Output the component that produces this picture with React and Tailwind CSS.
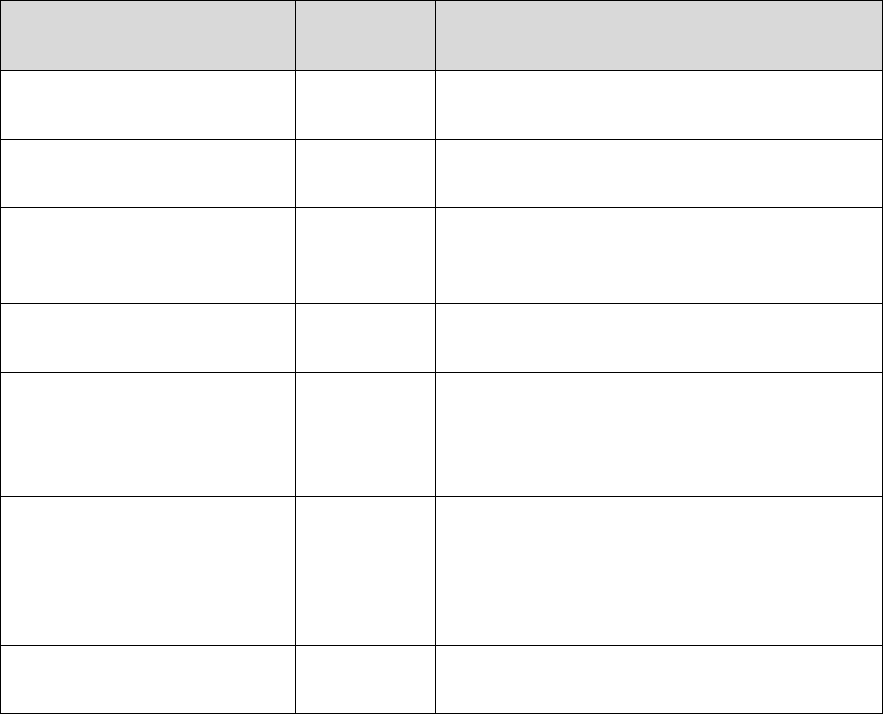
const ROWS = [
  { h: "h-[70px]", head: true },
  { h: "h-[69px]" },
  { h: "h-[68px]" },
  { h: "h-[96px]" },
  { h: "h-[69px]" },
  { h: "h-[124px]" },
  { h: "h-[149px]" },
  { h: "h-[69px]", last: true },
];

export default function App() {
  return (
    <div className="min-h-[715px] w-[884px] bg-white font-['Liberation_Sans',Arial,sans-serif] text-sm text-black">
      {/* empty grid, header row shaded */}
      <div className="flex w-[883px] flex-col">
        {ROWS.map((row, i) => (
          <div
            key={i}
            className={`flex ${row.h} ${row.head ? "bg-[#d9d9d9]" : "bg-white"}`}
          >
            <div className={`w-[295px] border-l border-t border-black ${row.last ? "border-b" : ""}`}></div>
            <div className={`w-[140px] border-l border-t border-black ${row.last ? "border-b" : ""}`}></div>
            <div className={`w-[448px] border-x border-t border-black ${row.last ? "border-b" : ""}`}></div>
          </div>
        ))}
      </div>
    </div>
  );
}
